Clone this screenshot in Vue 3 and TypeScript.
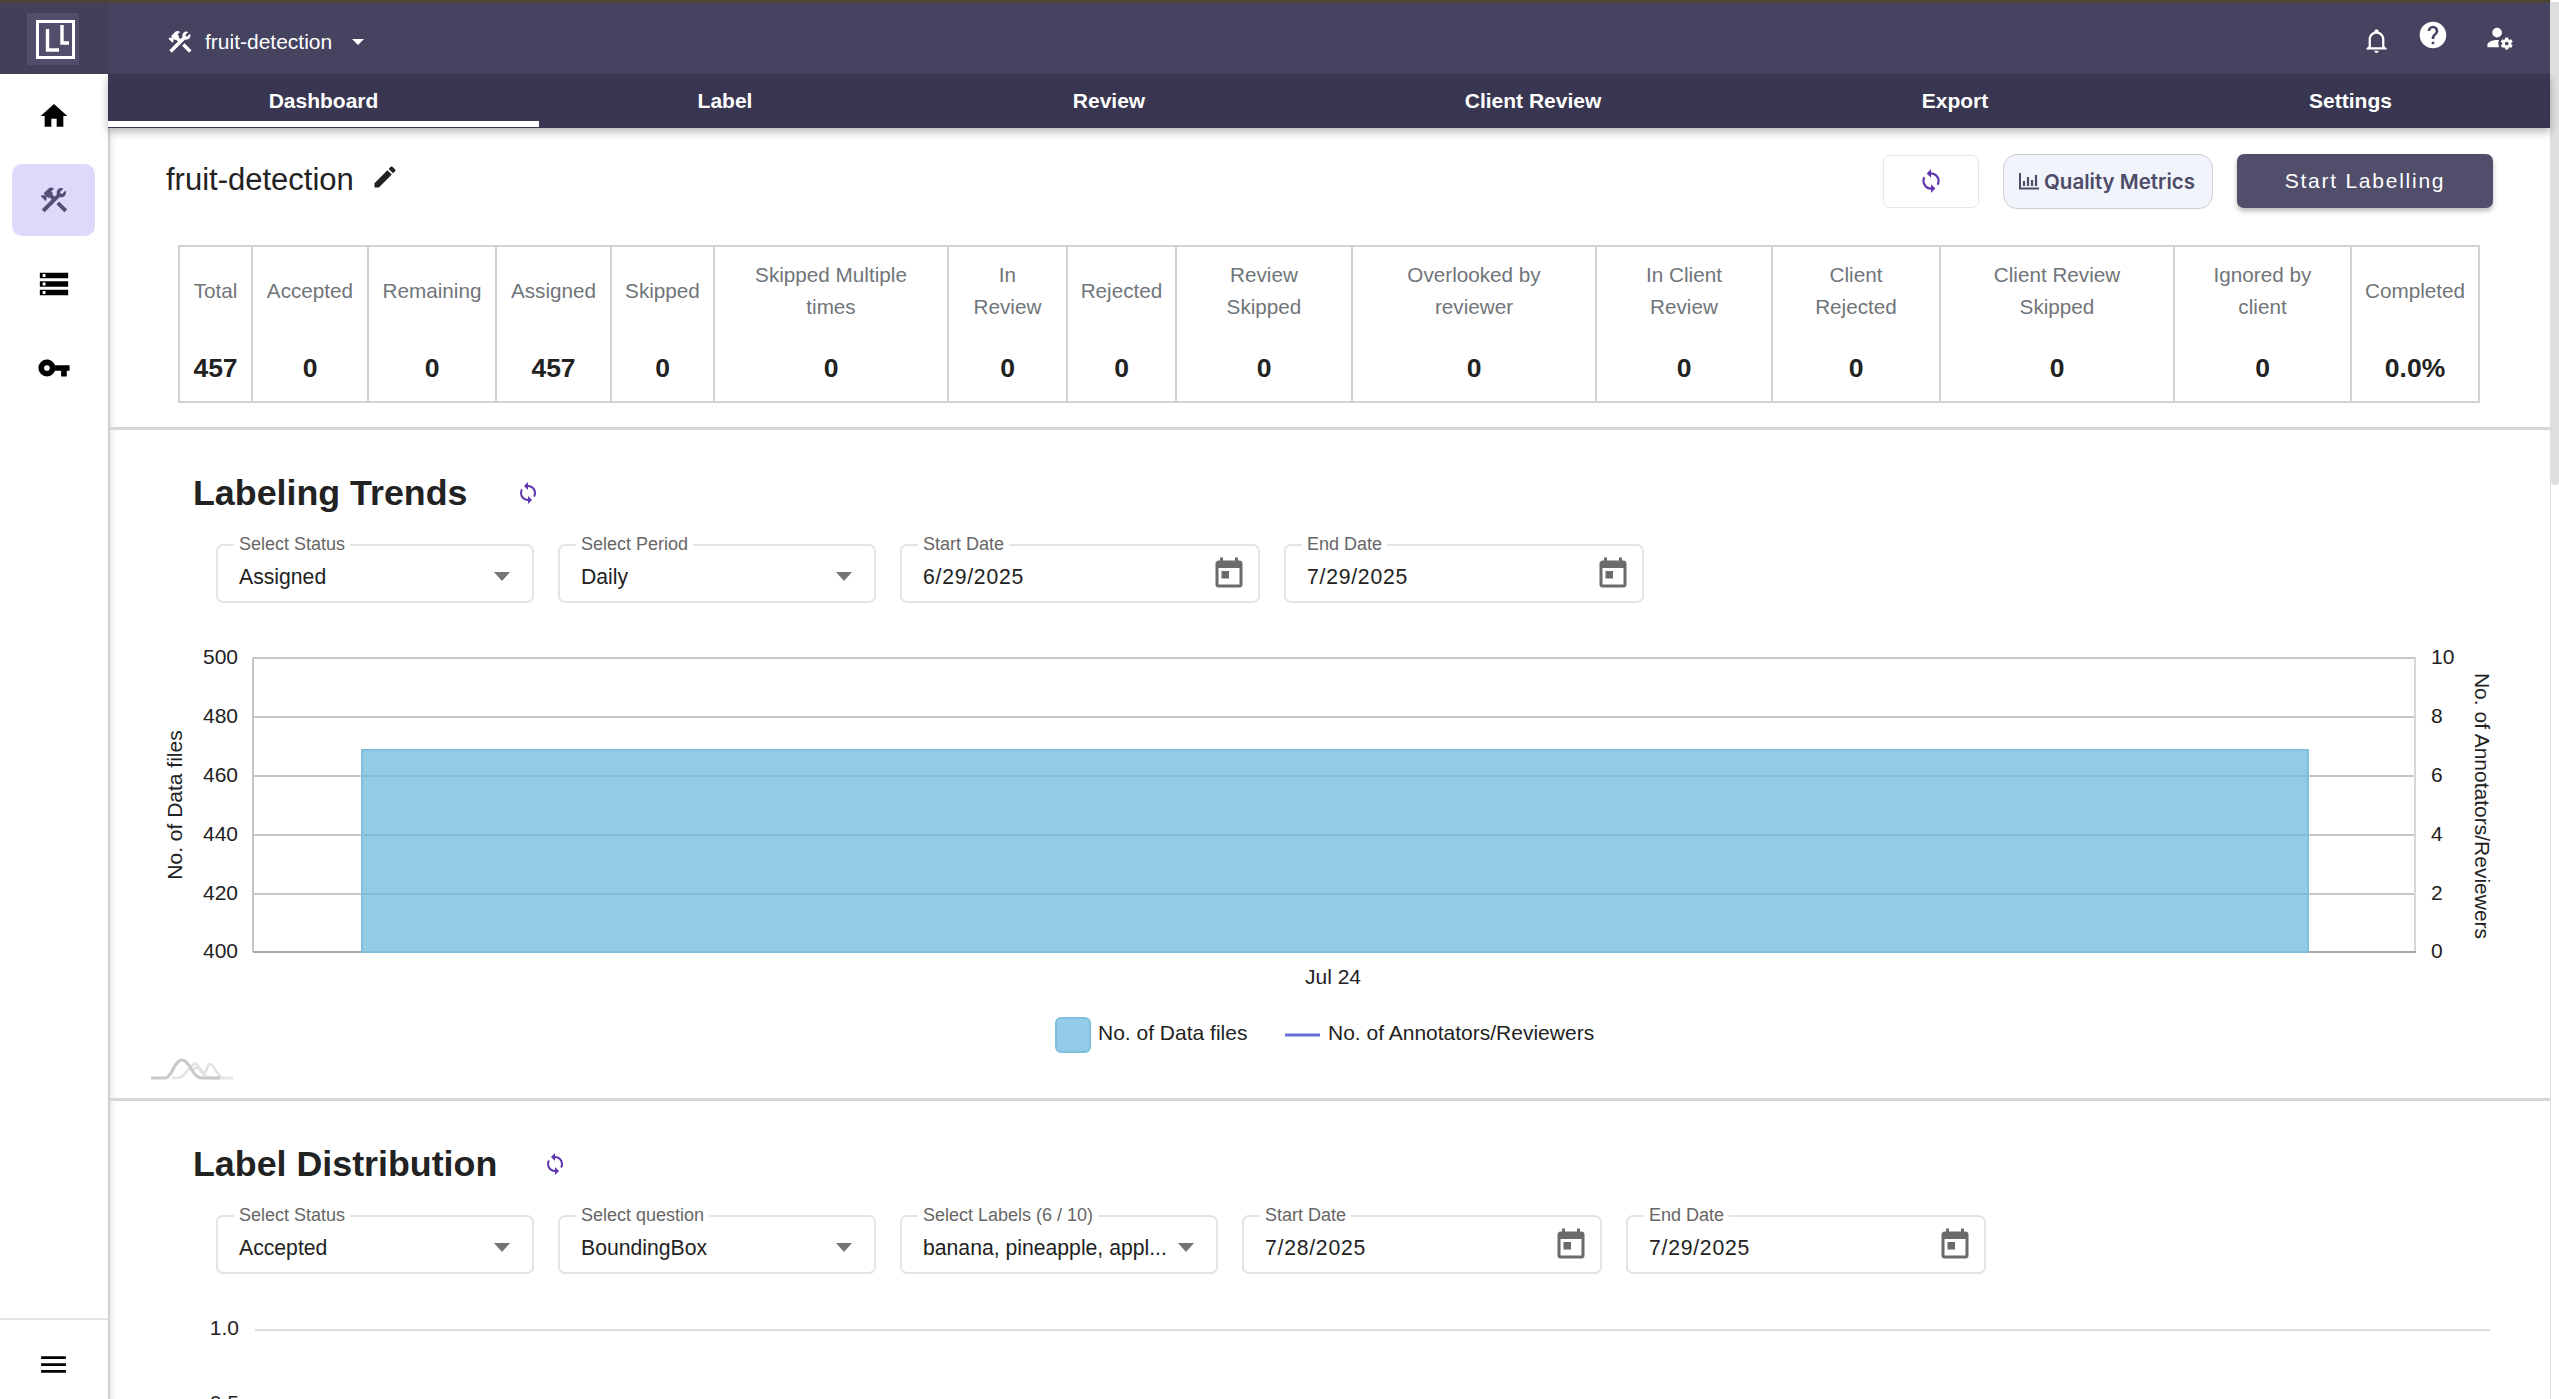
<script setup lang="ts">
interface Stat { lines: string[]; value: string; width: number }
interface Field { label: string; value: string; kind: 'select' | 'date'; wide: boolean }

const tabs: string[] = ['Dashboard', 'Label', 'Review', 'Client Review', 'Export', 'Settings']

const stats: Stat[] = [
  { lines: ['Total'], value: '457', width: 73 },
  { lines: ['Accepted'], value: '0', width: 116 },
  { lines: ['Remaining'], value: '0', width: 128 },
  { lines: ['Assigned'], value: '457', width: 115 },
  { lines: ['Skipped'], value: '0', width: 103 },
  { lines: ['Skipped Multiple', 'times'], value: '0', width: 234 },
  { lines: ['In', 'Review'], value: '0', width: 119 },
  { lines: ['Rejected'], value: '0', width: 109 },
  { lines: ['Review', 'Skipped'], value: '0', width: 176 },
  { lines: ['Overlooked by', 'reviewer'], value: '0', width: 244 },
  { lines: ['In Client', 'Review'], value: '0', width: 176 },
  { lines: ['Client', 'Rejected'], value: '0', width: 168 },
  { lines: ['Client Review', 'Skipped'], value: '0', width: 234 },
  { lines: ['Ignored by', 'client'], value: '0', width: 177 },
  { lines: ['Completed'], value: '0.0%', width: 126 }
]
const statColumns: string = stats.map((s) => s.width + 'px').join(' ')

const trendFields: Field[] = [
  { label: 'Select Status', value: 'Assigned', kind: 'select', wide: false },
  { label: 'Select Period', value: 'Daily', kind: 'select', wide: false },
  { label: 'Start Date', value: '6/29/2025', kind: 'date', wide: true },
  { label: 'End Date', value: '7/29/2025', kind: 'date', wide: true }
]
const distFields: Field[] = [
  { label: 'Select Status', value: 'Accepted', kind: 'select', wide: false },
  { label: 'Select question', value: 'BoundingBox', kind: 'select', wide: false },
  { label: 'Select Labels (6 / 10)', value: 'banana, pineapple, appl...', kind: 'select', wide: false },
  { label: 'Start Date', value: '7/28/2025', kind: 'date', wide: true },
  { label: 'End Date', value: '7/29/2025', kind: 'date', wide: true }
]

const leftTicks = [
  { t: '500', y: 658 }, { t: '480', y: 717 }, { t: '460', y: 776 },
  { t: '440', y: 835 }, { t: '420', y: 894 }, { t: '400', y: 952 }
]
const rightTicks: string[] = ['10', '8', '6', '4', '2', '0']

const syncPath = 'M12,18A6,6 0 0,1 6,12C6,11 6.25,10.03 6.7,9.2L5.24,7.74C4.46,8.97 4,10.43 4,12A8,8 0 0,0 12,20V23L16,19L12,15M12,4V1L8,5L12,9V6A6,6 0 0,1 18,12C18,13 17.75,13.97 17.3,14.8L18.76,16.26C19.54,15.03 20,13.57 20,12A8,8 0 0,0 12,4Z'
const toolsPath = 'M13.783 15.172l2.121-2.121 5.996 5.996-2.121 2.121zM17.5 10c1.93 0 3.5-1.57 3.5-3.5 0-.58-.16-1.12-.41-1.6l-2.7 2.7-1.49-1.49 2.7-2.7c-.48-.25-1.02-.41-1.6-.41C15.57 3 14 4.57 14 6.5c0 .41.08.8.21 1.16l-1.85 1.85-1.78-1.78.71-.71-1.41-1.41L12 3.49c-1.17-1.17-3.07-1.17-4.24 0L4.22 7.03l1.41 1.41H2.81l-.71.71 3.54 3.54.71-.71V9.15l1.41 1.41.71-.71 1.78 1.78-7.41 7.41 2.12 2.12L16.34 9.79c.36.13.75.21 1.16.21z'
const calendarPath = 'M7,10H12V15H7M19,19H5V8H19M19,3H18V1H16V3H8V1H6V3H5C3.89,3 3,3.9 3,5V19A2,2 0 0,0 5,21H19A2,2 0 0,0 21,19V5C21,3.89 20.1,3 19,3Z'
</script>

<template>
  <div class="app">
    <div class="main">
      <div class="accent"></div>
      <header class="topbar">
        <div class="logo-cell">
          <div class="logo">
            <svg viewBox="0 0 52 52" width="52" height="52">
              <rect x="10.5" y="8.5" width="36" height="36" fill="none" stroke="#fff" stroke-width="3" />
              <path d="M20.5 16V37H32" fill="none" stroke="#fff" stroke-width="3.4" />
              <path d="M35 12V30H42" fill="none" stroke="#fff" stroke-width="3.4" />
            </svg>
          </div>
        </div>
        <div class="project">
          <svg class="ic-project" viewBox="0 0 24 24"><path :d="toolsPath" /></svg>
          <span class="project-name">fruit-detection</span>
          <span class="caret"></span>
        </div>
        <div class="top-actions">
          <svg class="ic-bell" viewBox="0 0 24 24"><path d="M10 21H14C14 22.1 13.1 23 12 23S10 22.1 10 21M21 19V20H3V19L5 17V11C5 7.9 7 5.2 10 4.3V4C10 2.9 10.9 2 12 2S14 2.9 14 4V4.3C17 5.2 19 7.9 19 11V17L21 19M17 11C17 8.2 14.8 6 12 6S7 8.2 7 11V18H17V11Z" /></svg>
          <svg class="ic-help" viewBox="0 0 24 24"><path d="M15.07,11.25L14.17,12.17C13.45,12.89 13,13.5 13,15H11V14.5C11,13.39 11.45,12.39 12.17,11.67L13.41,10.41C13.78,10.05 14,9.55 14,9C14,7.89 13.1,7 12,7A2,2 0 0,0 10,9H8A4,4 0 0,1 12,5A4,4 0 0,1 16,9C16,9.88 15.64,10.67 15.07,11.25M13,19H11V17H13M12,2A10,10 0 0,0 2,12C2,17.52 6.48,22 12,22C17.52,22 22,17.52 22,12C22,6.47 17.5,2 12,2Z" /></svg>
          <svg class="ic-account" viewBox="0 0 24 24"><path d="M10 4A4 4 0 0 0 6 8A4 4 0 0 0 10 12A4 4 0 0 0 14 8A4 4 0 0 0 10 4M17 12C16.87 12 16.76 12.09 16.74 12.21L16.55 13.53C16.25 13.66 15.96 13.82 15.7 14L14.46 13.5C14.35 13.5 14.22 13.5 14.15 13.63L13.15 15.36C13.09 15.47 13.11 15.6 13.21 15.68L14.27 16.5C14.25 16.67 14.24 16.83 14.24 17C14.24 17.17 14.25 17.33 14.27 17.5L13.21 18.32C13.12 18.4 13.09 18.53 13.15 18.64L14.15 20.37C14.21 20.5 14.34 20.5 14.46 20.5L15.7 20C15.96 20.18 16.24 20.35 16.55 20.47L16.74 21.79C16.76 21.91 16.86 22 17 22H19C19.11 22 19.22 21.91 19.24 21.79L19.43 20.47C19.73 20.34 20 20.18 20.27 20L21.5 20.5C21.63 20.5 21.76 20.5 21.83 20.37L22.83 18.64C22.89 18.53 22.86 18.4 22.77 18.32L21.7 17.5C21.72 17.33 21.74 17.17 21.74 17C21.74 16.83 21.73 16.67 21.7 16.5L22.76 15.68C22.85 15.6 22.88 15.47 22.82 15.36L21.82 13.63C21.76 13.5 21.63 13.5 21.5 13.5L20.27 14C20 13.82 19.73 13.65 19.42 13.53L19.23 12.21C19.22 12.09 19.11 12 19 12H17M10 14C5.58 14 2 15.79 2 18V20H11.68A7 7 0 0 1 11 17A7 7 0 0 1 11.64 14.09C11.1 14.03 10.55 14 10 14M18 15.5C18.83 15.5 19.5 16.17 19.5 17C19.5 17.83 18.83 18.5 18 18.5C17.16 18.5 16.5 17.83 16.5 17C16.5 16.17 17.17 15.5 18 15.5Z" /></svg>
        </div>
      </header>

      <div class="below">
        <aside class="sidebar">
          <nav class="side-nav">
            <div class="side-item">
              <svg class="ic-home" viewBox="0 0 24 24"><path d="M10,20V14H14V20H19V12H22L12,3L2,12H5V20H10Z" /></svg>
            </div>
            <div class="side-item active">
              <svg class="ic-tools" viewBox="0 0 24 24"><path :d="toolsPath" /></svg>
            </div>
            <div class="side-item">
              <svg class="ic-storage" viewBox="0 0 24 24"><path d="M2 20h20v-4H2v4zm2-3h2v2H4v-2zM2 4v4h20V4H2zm4 3H4V5h2v2zm-4 7h20v-4H2v4zm2-3h2v2H4v-2z" /></svg>
            </div>
            <div class="side-item">
              <svg class="ic-storage" viewBox="0 0 24 24"><path d="M7,14A2,2 0 0,1 5,12A2,2 0 0,1 7,10A2,2 0 0,1 9,12A2,2 0 0,1 7,14M12.65,10C11.83,7.67 9.61,6 7,6A6,6 0 0,0 1,12A6,6 0 0,0 7,18C9.61,18 11.83,16.33 12.65,14H17V18H21V14H23V10H12.65Z" /></svg>
            </div>
          </nav>
          <div class="side-foot">
            <svg class="ic-menu" viewBox="0 0 24 24"><path d="M3,6H21V8H3V6M3,11H21V13H3V11M3,16H21V18H3V16Z" /></svg>
          </div>
        </aside>

        <div class="page">
          <div class="tabs">
            <div v-for="(t, i) in tabs" :key="t" class="tab" :class="{ on: i === 0 }">{{ t }}</div>
          </div>

          <main class="content">
            <div class="head">
              <div class="title-wrap">
                <h1 class="title">fruit-detection</h1>
                <svg class="ic-pencil" viewBox="0 0 24 24"><path d="M20.71,7.04C21.1,6.65 21.1,6 20.71,5.63L18.37,3.29C18,2.9 17.35,2.9 16.96,3.29L15.12,5.12L18.87,8.87M3,17.25V21H6.75L17.81,9.93L14.06,6.18L3,17.25Z" /></svg>
              </div>
              <div class="actions">
                <button class="btn-sync">
                  <svg class="ic-sync-lg" viewBox="0 0 24 24"><path :d="syncPath" /></svg>
                </button>
                <button class="btn-quality">
                  <svg class="ic-chart" viewBox="0 0 20 17">
                    <path d="M1 0V15.5H20" fill="none" stroke="#4e4b69" stroke-width="2" />
                    <path d="M5 8V13M9 4V13M13 7V13M17 2V13" fill="none" stroke="#4e4b69" stroke-width="2.2" />
                  </svg>
                  <span>Quality Metrics</span>
                </button>
                <button class="btn-start">Start Labelling</button>
              </div>
            </div>

            <div class="stats" :style="{ gridTemplateColumns: statColumns }">
              <div v-for="s in stats" :key="s.lines.join(' ')" class="stat">
                <div class="stat-label">
                  <span v-for="l in s.lines" :key="l" class="stat-line">{{ l }}</span>
                </div>
                <div class="stat-value">{{ s.value }}</div>
              </div>
            </div>

            <section class="section first">
              <div class="sec-head">
                <h2 class="sec-title">Labeling Trends</h2>
                <svg class="ic-sync trends" viewBox="0 0 24 24"><path :d="syncPath" /></svg>
              </div>
              <div class="filters">
                <div v-for="f in trendFields" :key="f.label" class="field" :class="{ wide: f.wide }">
                  <span class="field-label">{{ f.label }}</span>
                  <span class="field-value" :class="{ date: f.kind === 'date' }">{{ f.value }}</span>
                  <span v-if="f.kind === 'select'" class="arrow"></span>
                  <svg v-else class="ic-cal" viewBox="0 0 24 24"><path :d="calendarPath" /></svg>
                </div>
              </div>
              <svg class="chart" viewBox="110 603 2440 495" width="2440" height="495">
                <g stroke="#c6c6c6" stroke-width="2">
                  <line v-for="tick in leftTicks" :key="tick.t" x1="253" x2="2416" :y1="tick.y" :y2="tick.y" />
                  <line x1="253" x2="253" y1="658" y2="952" />
                  <line x1="2415" x2="2415" y1="658" y2="952" stroke="#d8d8d8" />
                </g>
                <line x1="253" x2="2416" y1="952" y2="952" stroke="#a9a9a9" stroke-width="2" />
                <rect x="362" y="750" width="1946" height="202" fill="#6db7dd" fill-opacity="0.74" stroke="#80bfde" stroke-width="2" />
                <g class="tx">
                  <text v-for="tick in leftTicks" :key="tick.t" x="238" :y="tick.y + 6" text-anchor="end">{{ tick.t }}</text>
                  <text v-for="(r, i) in rightTicks" :key="r" x="2431" :y="leftTicks[i].y + 6">{{ r }}</text>
                  <text x="1333" y="984" text-anchor="middle">Jul 24</text>
                  <text transform="translate(182 805) rotate(-90)" text-anchor="middle">No. of Data files</text>
                  <text transform="translate(2475 806) rotate(90)" text-anchor="middle">No. of Annotators/Reviewers</text>
                  <text x="1098" y="1040">No. of Data files</text>
                  <text x="1328" y="1040">No. of Annotators/Reviewers</text>
                </g>
                <rect x="1056" y="1018" width="34" height="34" rx="5" fill="#94cbe8" stroke="#7fc0df" stroke-width="2" />
                <line x1="1285" x2="1320" y1="1035" y2="1035" stroke="#6a6fd3" stroke-width="3" />
                <path d="M172 1078C180 1078 182 1078 188 1070S196 1062 199 1068 206 1078 212 1078 226 1078 233 1078" fill="none" stroke="#e6e6e6" stroke-width="3" />
                <path d="M192 1070C196 1066 200 1068 203 1072S207 1064 210 1064 216 1072 221 1078" fill="none" stroke="#e2e2e2" stroke-width="2.5" />
                <path d="M151 1078H165C172 1078 174 1060 182 1060S192 1078 202 1078H220" fill="none" stroke="#c9c9c9" stroke-width="3" />
              </svg>
            </section>

            <section class="section second">
              <div class="sec-head">
                <h2 class="sec-title">Label Distribution</h2>
                <svg class="ic-sync dist" viewBox="0 0 24 24"><path :d="syncPath" /></svg>
              </div>
              <div class="filters">
                <div v-for="f in distFields" :key="f.label + f.value" class="field" :class="{ wide: f.wide }">
                  <span class="field-label">{{ f.label }}</span>
                  <span class="field-value" :class="{ date: f.kind === 'date' }">{{ f.value }}</span>
                  <span v-if="f.kind === 'select'" class="arrow"></span>
                  <svg v-else class="ic-cal" viewBox="0 0 24 24"><path :d="calendarPath" /></svg>
                </div>
              </div>
              <svg class="chart" viewBox="110 1274 2440 170" width="2440" height="170">
                <line x1="255" x2="2490" y1="1330" y2="1330" stroke="#dcdcdc" stroke-width="2" />
                <g class="tx">
                  <text x="239" y="1335" text-anchor="end">1.0</text>
                  <text x="239" y="1410" text-anchor="end">0.5</text>
                </g>
              </svg>
            </section>
          </main>
        </div>
      </div>
    </div>

    <div class="scrollbar"><div class="thumb"></div></div>
  </div>
</template>

<style>
html, body { margin: 0; padding: 0; overflow: hidden; background: #fff; }
</style>

<style scoped>
* { box-sizing: border-box; }
.app {
  display: flex;
  width: 100vw;
  height: 100vh;
  overflow: hidden;
  font-family: "Liberation Sans", Arial, sans-serif;
  color: #222;
  background: #fff;
}
.main { flex: 1; min-width: 0; display: flex; flex-direction: column; }
.accent { height: 3px; background: #4d4337; }
.topbar {
  height: 71px;
  display: flex;
  align-items: center;
  background: #45435f;
  color: #fff;
  fill: #fff;
}
.logo-cell { width: 108px; height: 100%; display: flex; align-items: center; justify-content: center; background: #424059; }
.logo { width: 52px; height: 52px; background: #504e6a; margin-right: 2px; }
.logo svg { display: block; }
.project { display: flex; align-items: center; margin-left: 58px; padding-top: 7px; }
.ic-project { width: 28px; height: 28px; }
.project-name { margin-left: 11px; font-size: 21px; }
.caret { margin-left: 20px; width: 0; height: 0; border-left: 6px solid transparent; border-right: 6px solid transparent; border-top: 6px solid #fff; }
.top-actions { margin-left: auto; display: flex; align-items: center; padding-right: 36px; }
.ic-bell { width: 27px; height: 27px; margin-top: 3px; }
.ic-help { width: 32px; height: 32px; margin-left: 27px; margin-bottom: 7px; }
.ic-account { width: 29px; height: 29px; margin-left: 36px; margin-bottom: 3px; }

.below { flex: 1; min-height: 0; display: flex; }
.sidebar { width: 108px; flex: none; display: flex; flex-direction: column; background: #fff; }
.side-nav { flex: 1; padding: 6px 13px 0 12px; display: flex; flex-direction: column; gap: 12px; }
.side-item { height: 72px; display: flex; align-items: center; justify-content: center; border-radius: 10px; fill: #000; }
.side-item.active { background: #ded9fb; fill: #534f72; }
.ic-home { width: 32px; height: 32px; }
.ic-tools { width: 32px; height: 32px; }
.ic-storage { width: 34px; height: 34px; }
.side-foot { height: 81px; border-top: 2px solid #e4e4e4; display: flex; justify-content: center; padding-top: 28px; padding-right: 1px; }
.ic-menu { width: 33px; height: 33px; fill: #000; }

.page { flex: 1; min-width: 0; display: flex; flex-direction: column; }
.tabs {
  height: 54px;
  flex: none;
  display: grid;
  grid-template-columns: 431px 372px 396px 452px 392px 399px;
  background: #383650;
  padding-bottom: 1px;
  box-shadow: 0 4px 8px rgba(0, 0, 0, 0.28);
  position: relative;
  z-index: 2;
}
.tab { display: flex; align-items: center; justify-content: center; color: #fff; font-weight: 700; font-size: 21px; }
.tab.on { box-shadow: inset 0 -6px 0 #fff; }

.content {
  flex: 1;
  min-height: 0;
  overflow: hidden;
  border-left: 2px solid #cfcfcf;
  box-shadow: inset 9px 0 8px -8px rgba(0, 0, 0, 0.12);
}
.head { height: 117px; padding: 26px 57px 37px 56px; display: flex; align-items: center; justify-content: space-between; }
.title-wrap { display: flex; align-items: center; }
.title { margin: 0 0 2px; font-size: 31px; font-weight: 400; color: #222; line-height: 1.2; }
.ic-pencil { width: 28px; height: 28px; margin-left: 17px; margin-bottom: 8px; fill: #222; }
.actions { display: flex; align-items: center; gap: 24px; }
button { font-family: inherit; cursor: pointer; }
.btn-sync { width: 96px; height: 53px; background: #fff; border: 1.5px solid #e6e6e6; border-radius: 7px; display: flex; align-items: center; justify-content: center; padding: 0; }
.ic-sync-lg { width: 26px; height: 26px; fill: #5e35b1; }
.btn-quality {
  width: 210px;
  height: 55px;
  background: #f1f4fa;
  border: 1.5px solid #cdcdcd;
  border-radius: 14px;
  display: flex;
  align-items: center;
  justify-content: center;
  gap: 5px;
  padding: 0 2px 0 0;
  color: #4e4b69;
  font-family: Inter, "Liberation Sans", sans-serif;
  font-weight: 600;
  font-size: 20.5px;
}
.ic-chart { width: 20px; height: 17px; }
.btn-start {
  width: 256px;
  height: 54px;
  background: #514e6b;
  border: 0;
  border-radius: 7px;
  color: #fff;
  font-size: 21px;
  letter-spacing: 1.75px;
  box-shadow: 0 3px 5px rgba(0, 0, 0, 0.28);
}

.stats { margin-left: 68px; width: 2302px; height: 158px; display: grid; border: 2px solid #d2d2d2; }
.stat { display: flex; flex-direction: column; border-right: 2px solid #d2d2d2; min-width: 0; text-align: center; }
.stat:last-child { border-right: 0; }
.stat-label { height: 88px; display: flex; flex-direction: column; align-items: center; justify-content: center; color: #70757a; font-size: 20.7px; line-height: 32px; }
.stat-line { display: block; white-space: nowrap; }
.stat-value { flex: 1; display: flex; align-items: center; justify-content: center; font-size: 26.5px; font-weight: 700; color: #222; }

.section { border-top: 3px solid #d8d8d8; }
.section.first { margin-top: 24px; }
.sec-head { height: 46px; margin-top: 40px; padding-left: 83px; display: flex; align-items: center; }
.sec-title { margin: 0; font-size: 35.8px; font-weight: 700; color: #222; line-height: 46px; white-space: nowrap; }
.ic-sync { width: 24px; height: 24px; fill: #5e35b1; }
.ic-sync.trends { margin-left: 48px; }
.ic-sync.dist { margin-left: 46px; }
.filters { margin-top: 28px; padding-left: 106px; display: flex; gap: 24px; }
.field {
  position: relative;
  width: 318px;
  height: 59px;
  border: 2px solid #e4e4e4;
  border-radius: 7px;
  display: flex;
  align-items: center;
  justify-content: space-between;
  padding: 0 22px 0 21px;
}
.field.wide { width: 360px; padding-right: 11px; }
.field-label {
  position: absolute;
  top: -13px;
  left: 16px;
  padding: 0 5px;
  background: #fff;
  font-size: 18px;
  line-height: 22px;
  color: #666;
  white-space: nowrap;
}
.field-value { font-size: 21.2px; color: #222; padding-top: 6px; white-space: nowrap; }
.field-value.date { letter-spacing: 0.75px; }
.arrow { margin-top: 6px; width: 0; height: 0; border-left: 8px solid transparent; border-right: 8px solid transparent; border-top: 9px solid #757575; flex: none; }
.ic-cal { width: 36px; height: 36px; fill: #6b6b6b; flex: none; }
.chart { display: block; }
.tx text { font-family: "Liberation Sans", Arial, sans-serif; font-size: 21px; fill: #222; }

.scrollbar { width: 9px; flex: none; border-left: 1px solid #ddd; background: #fff; padding-top: 2px; }
.thumb { height: 483px; background: #dfdfdf; border-radius: 0 0 4px 4px; }
</style>
